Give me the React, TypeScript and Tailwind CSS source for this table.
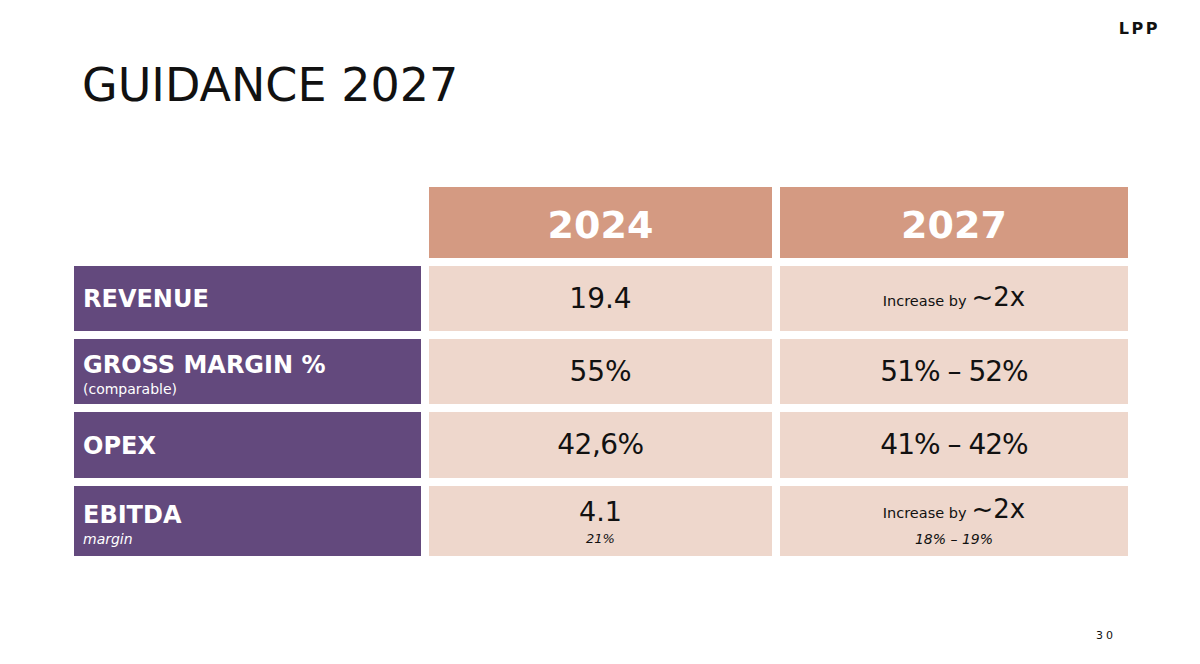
import React from 'react';

const font = { fontFamily: '"DejaVu Sans", "Liberation Sans", sans-serif' };

type Row = {
    label: string;
    sub?: string;
    subItalic?: boolean;
    v2024: React.ReactNode;
    v2027: React.ReactNode;
    h: string;
};

function Increase() {
    return (
        <div className="flex items-baseline justify-center gap-[5px]">
            <span className="text-[14.5px]">Increase by</span>
            <span className="text-[26px] leading-none">~2x</span>
        </div>
    );
}

const rows: Row[] = [
    { label: 'REVENUE', v2024: <span className="text-[28px]">19.4</span>, v2027: <Increase />, h: 'h-[65px]' },
    {
        label: 'GROSS MARGIN %',
        sub: '(comparable)',
        v2024: <span className="text-[28px]">55%</span>,
        v2027: <span className="text-[28px] tracking-[-1px]">51% – 52%</span>,
        h: 'h-[65px]',
    },
    {
        label: 'OPEX',
        v2024: <span className="text-[28px] tracking-[-0.5px]">42,6%</span>,
        v2027: <span className="text-[28px] tracking-[-1px]">41% – 42%</span>,
        h: 'h-[66px]',
    },
    {
        label: 'EBITDA',
        sub: 'margin',
        subItalic: true,
        v2024: (
            <div className="flex flex-col items-center pt-[4px]">
                <span className="text-[27px] leading-[30px]">4.1</span>
                <span className="text-[13px] italic mt-[2px]">21%</span>
            </div>
        ),
        v2027: (
            <div className="flex flex-col items-center pt-[4px]">
                <Increase />
                <span className="text-[14px] italic mt-[4px]">18% – 19%</span>
            </div>
        ),
        h: 'h-[70px]',
    },
];

export default function App() {
    return (
        <div className="w-[1200px] h-[664px] bg-white text-[#111] flex flex-col overflow-hidden" style={font}>
            {/* Logo */}
            <div className="flex justify-end pr-[40px] pt-[19px]">
                <span className="text-[16px] font-bold tracking-[2.5px] leading-[20px]">LPP</span>
            </div>

            <h1 className="ml-[82px] mt-[23px] text-[46px] leading-[46px] font-normal">
                GUIDANCE 2027
            </h1>

            {/* Table */}
            <div className="ml-[74px] mt-[79px] grid grid-cols-[347px_343px_348px] gap-x-2 gap-y-2">
                <div className="h-[71px]" />
                <div className="h-[71px] bg-[#d49a82] flex items-center justify-center pt-[6px]">
                    <span className="text-white font-bold text-[38px]">2024</span>
                </div>
                <div className="h-[71px] bg-[#d49a82] flex items-center justify-center pt-[6px]">
                    <span className="text-white font-bold text-[38px]">2027</span>
                </div>

                {rows.map((r) => (
                    <React.Fragment key={r.label}>
                        <div className={`${r.h} bg-[#63497d] text-white flex flex-col justify-center pl-[9px] ${r.sub ? 'pt-[6px]' : 'pt-[1px]'}`}>
                            <span className="font-bold text-[24px] leading-[26px]">{r.label}</span>
                            {r.sub && (
                                <span className={`text-[14px] leading-[16px] mt-[3px] ${r.subItalic ? 'italic' : ''}`}>{r.sub}</span>
                            )}
                        </div>
                        <div className={`${r.h} bg-[#eed7cc] flex items-center justify-center`}>{r.v2024}</div>
                        <div className={`${r.h} bg-[#eed7cc] flex items-center justify-center`}>{r.v2027}</div>
                    </React.Fragment>
                ))}
            </div>

            {/* Page number */}
            <div className="mt-auto flex justify-end pr-[84px] pb-[20px]">
                <span className="text-[11px] tracking-[3px]">30</span>
            </div>
        </div>
    );
}
